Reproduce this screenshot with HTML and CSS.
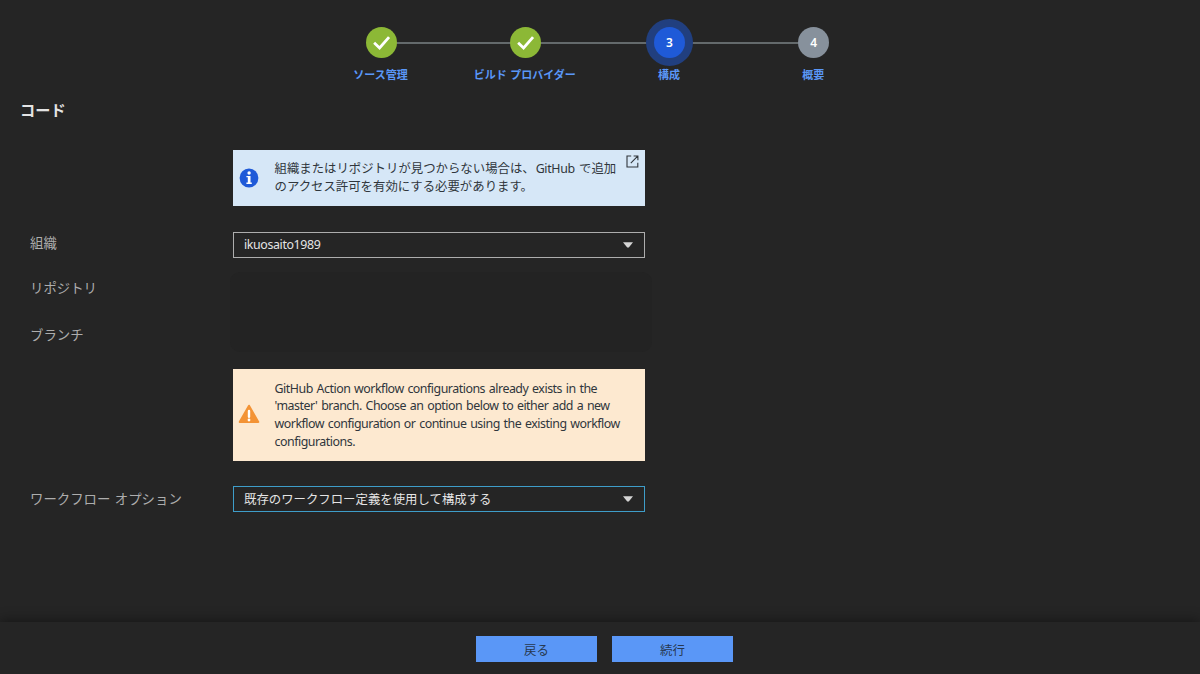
FILE: index.html
```html
<!DOCTYPE html>
<html lang="ja">
<head>
<meta charset="utf-8">
<title>構成</title>
<link rel="stylesheet" href="styles.css">
</head>
<body>
<main class="content">
  <ol class="stepper">
    <li class="step">
      <span class="dot done"><svg width="32" height="32" viewBox="0 0 32 32"><path d="M8.4 15.8 14 21.2 23.8 10" fill="none" stroke="#fff" stroke-width="2.9"/></svg></span>
      <span class="step-label">ソース管理</span>
    </li>
    <li class="step">
      <span class="dot done"><svg width="32" height="32" viewBox="0 0 32 32"><path d="M8.4 15.8 14 21.2 23.8 10" fill="none" stroke="#fff" stroke-width="2.9"/></svg></span>
      <span class="step-label">ビルド プロバイダー</span>
    </li>
    <li class="step">
      <span class="dot current">3</span>
      <span class="step-label">構成</span>
    </li>
    <li class="step">
      <span class="dot pending">4</span>
      <span class="step-label">概要</span>
    </li>
  </ol>
  <h1 class="title">コード</h1>
  <div class="alert info">
    <svg class="alert-icon" width="20" height="20" viewBox="0 0 20 20"><circle cx="10" cy="10" r="9.4" fill="#1f5ad8"/><circle cx="10.1" cy="5" r="1.7" fill="#fff"/><path d="M7.4 7.9h4.1v6.7h1.3V16H7.4v-1.4h1.4V9.3H7.4z" fill="#fff"/></svg>
    <p class="alert-text"><span class="line">組織またはリポジトリが見つからない場合は、<span class="latin">GitHub</span> で追加</span><span class="line">のアクセス許可を有効にする必要があります。</span></p>
    <svg class="external" width="13" height="13" viewBox="0 0 13 13"><path d="M5.2 1H1v11h10.8V7.8M7.6 1h4.3v4.3M11.7 1.2 4.8 8.2" fill="none" stroke="#30363c" stroke-width="1.1"/></svg>
  </div>
  <div class="row organization">
    <span class="label">組織</span>
    <div class="select"><span class="latin">ikuosaito1989</span><svg width="10" height="6" viewBox="0 0 10 6"><path d="M0 .3h10L5.8 5.6H4.2z" fill="#d4d4d4"/></svg></div>
  </div>
  <div class="source">
    <div class="source-labels"><span class="label">リポジトリ</span><span class="label">ブランチ</span></div>
    <div class="blank"></div>
  </div>
  <div class="alert warning">
    <svg class="alert-icon" width="22" height="20" viewBox="0 0 22 20"><path d="M11 1.7 20.3 18H1.7z" fill="#f39335" stroke="#f39335" stroke-width="2" stroke-linejoin="round"/><path d="M11 7v5.7" stroke="#fff" stroke-width="2.4" stroke-linecap="round"/><circle cx="11" cy="16" r="1.4" fill="#fff"/></svg>
    <p class="alert-text latin"><span class="line">GitHub Action workflow configurations already exists in the</span><span class="line">'master' branch. Choose an option below to either add a new</span><span class="line">workflow configuration or continue using the existing workflow</span><span class="line">configurations.</span></p>
  </div>
  <div class="row workflow">
    <span class="label">ワークフロー オプション</span>
    <div class="select focused"><span>既存のワークフロー定義を使用して構成する</span><svg width="10" height="6" viewBox="0 0 10 6"><path d="M0 .3h10L5.8 5.6H4.2z" fill="#d4d4d4"/></svg></div>
  </div>
</main>
<footer class="footer">
  <button class="button">戻る</button>
  <button class="button">続行</button>
</footer>
</body>
</html>
```
FILE: styles.css
```css
* { box-sizing: border-box; }
body {
  margin: 0;
  width: 1200px;
  height: 674px;
  overflow: hidden;
  display: flex;
  flex-direction: column;
  background: #252525;
  color: #e4e4e4;
  font: 12.4px/18px "Noto Sans CJK JP", sans-serif;
  word-spacing: 1.5px;
}
.content { height: 622px; }
.latin {
  font-family: "Noto Sans", sans-serif;
  letter-spacing: -.48px;
  word-spacing: 1px;
}

.stepper {
  list-style: none;
  margin: 0;
  padding: 27px 0 0 309px;
  display: flex;
}
.step {
  width: 144.2px;
  display: flex;
  flex-direction: column;
  align-items: center;
  position: relative;
}
/* connector back to the previous step */
.step + .step::before {
  content: "";
  position: absolute;
  top: 15px;
  right: 50%;
  width: 100%;
  height: 1.5px;
  background: #646a6c;
}
.dot {
  position: relative;
  z-index: 1;
  width: 31px;
  height: 31px;
  border-radius: 50%;
  display: flex;
  align-items: center;
  justify-content: center;
  color: #fff;
  font: 600 12px "Noto Sans", sans-serif;
}
.done { background: #8cb836; }
.current { background: #1f5ad8; box-shadow: 0 0 0 8px #213f7f; }
.pending { background: #87919c; }
.step-label {
  margin-top: 7px;
  padding-right: 1px;
  font-size: 11px;
  line-height: 18px;
  font-weight: bold;
  word-spacing: 1px;
  color: #5a97f7;
  white-space: nowrap;
}

.title {
  margin: 16px 0 0 20px;
  font-size: 15.2px;
  line-height: 20px;
}

.alert {
  margin-left: 233px;
  width: 412px;
  display: flex;
  align-items: center;
  color: #30363c;
}
.info { margin-top: 31px; height: 56px; background: #d6e7f7; }
.warning { margin-top: 17px; height: 92px; background: #fde9d0; }
.alert-icon { flex: none; width: 22px; margin-left: 5px; }
.warning .alert-icon { margin-bottom: 3px; }
.alert-text {
  margin: 0 0 0 14.5px;
  flex: 1;
  line-height: 17.7px;
}
.info .latin { margin-left: 1px; letter-spacing: -.35px; }
.line { display: block; white-space: nowrap; }
.external { align-self: flex-start; flex: none; margin: 5px 6px 0 0; }

.row { display: flex; align-items: center; padding-left: 30px; }
.organization { margin-top: 26px; }
.organization .label { padding-bottom: 6px; }
.workflow { margin-top: 25px; }
.workflow .label { padding-bottom: 2px; }
.label {
  width: 203px;
  flex: none;
  font-size: 13.4px;
  line-height: 20px;
  color: #adadad;
  white-space: nowrap;
}
.select {
  width: 412px;
  height: 26px;
  border: 1.5px solid #adadad;
  padding: 0 11px 0 10px;
  display: flex;
  align-items: center;
  justify-content: space-between;
}
.select .latin { letter-spacing: -.38px; }
.focused { border-color: #3e9dc9; }

.source { display: flex; padding: 14px 0 0 30px; }
.source-labels {
  width: 200px;
  padding-top: 5px;
  display: flex;
  flex-direction: column;
  gap: 27px;
}
.blank { width: 422px; height: 80px; border-radius: 10px; background: #232323; }

.footer {
  height: 52px;
  padding: 13.5px 0 0 476px;
  display: flex;
  gap: 15px;
  background: #252525;
  box-shadow: 0 -1px 12px rgba(0, 0, 0, .45);
}
.button {
  width: 121px;
  height: 26px;
  padding: 3px 0 0;
  border: 0;
  background: #5a97f7;
  color: #27384f;
  font: inherit;
}
```
